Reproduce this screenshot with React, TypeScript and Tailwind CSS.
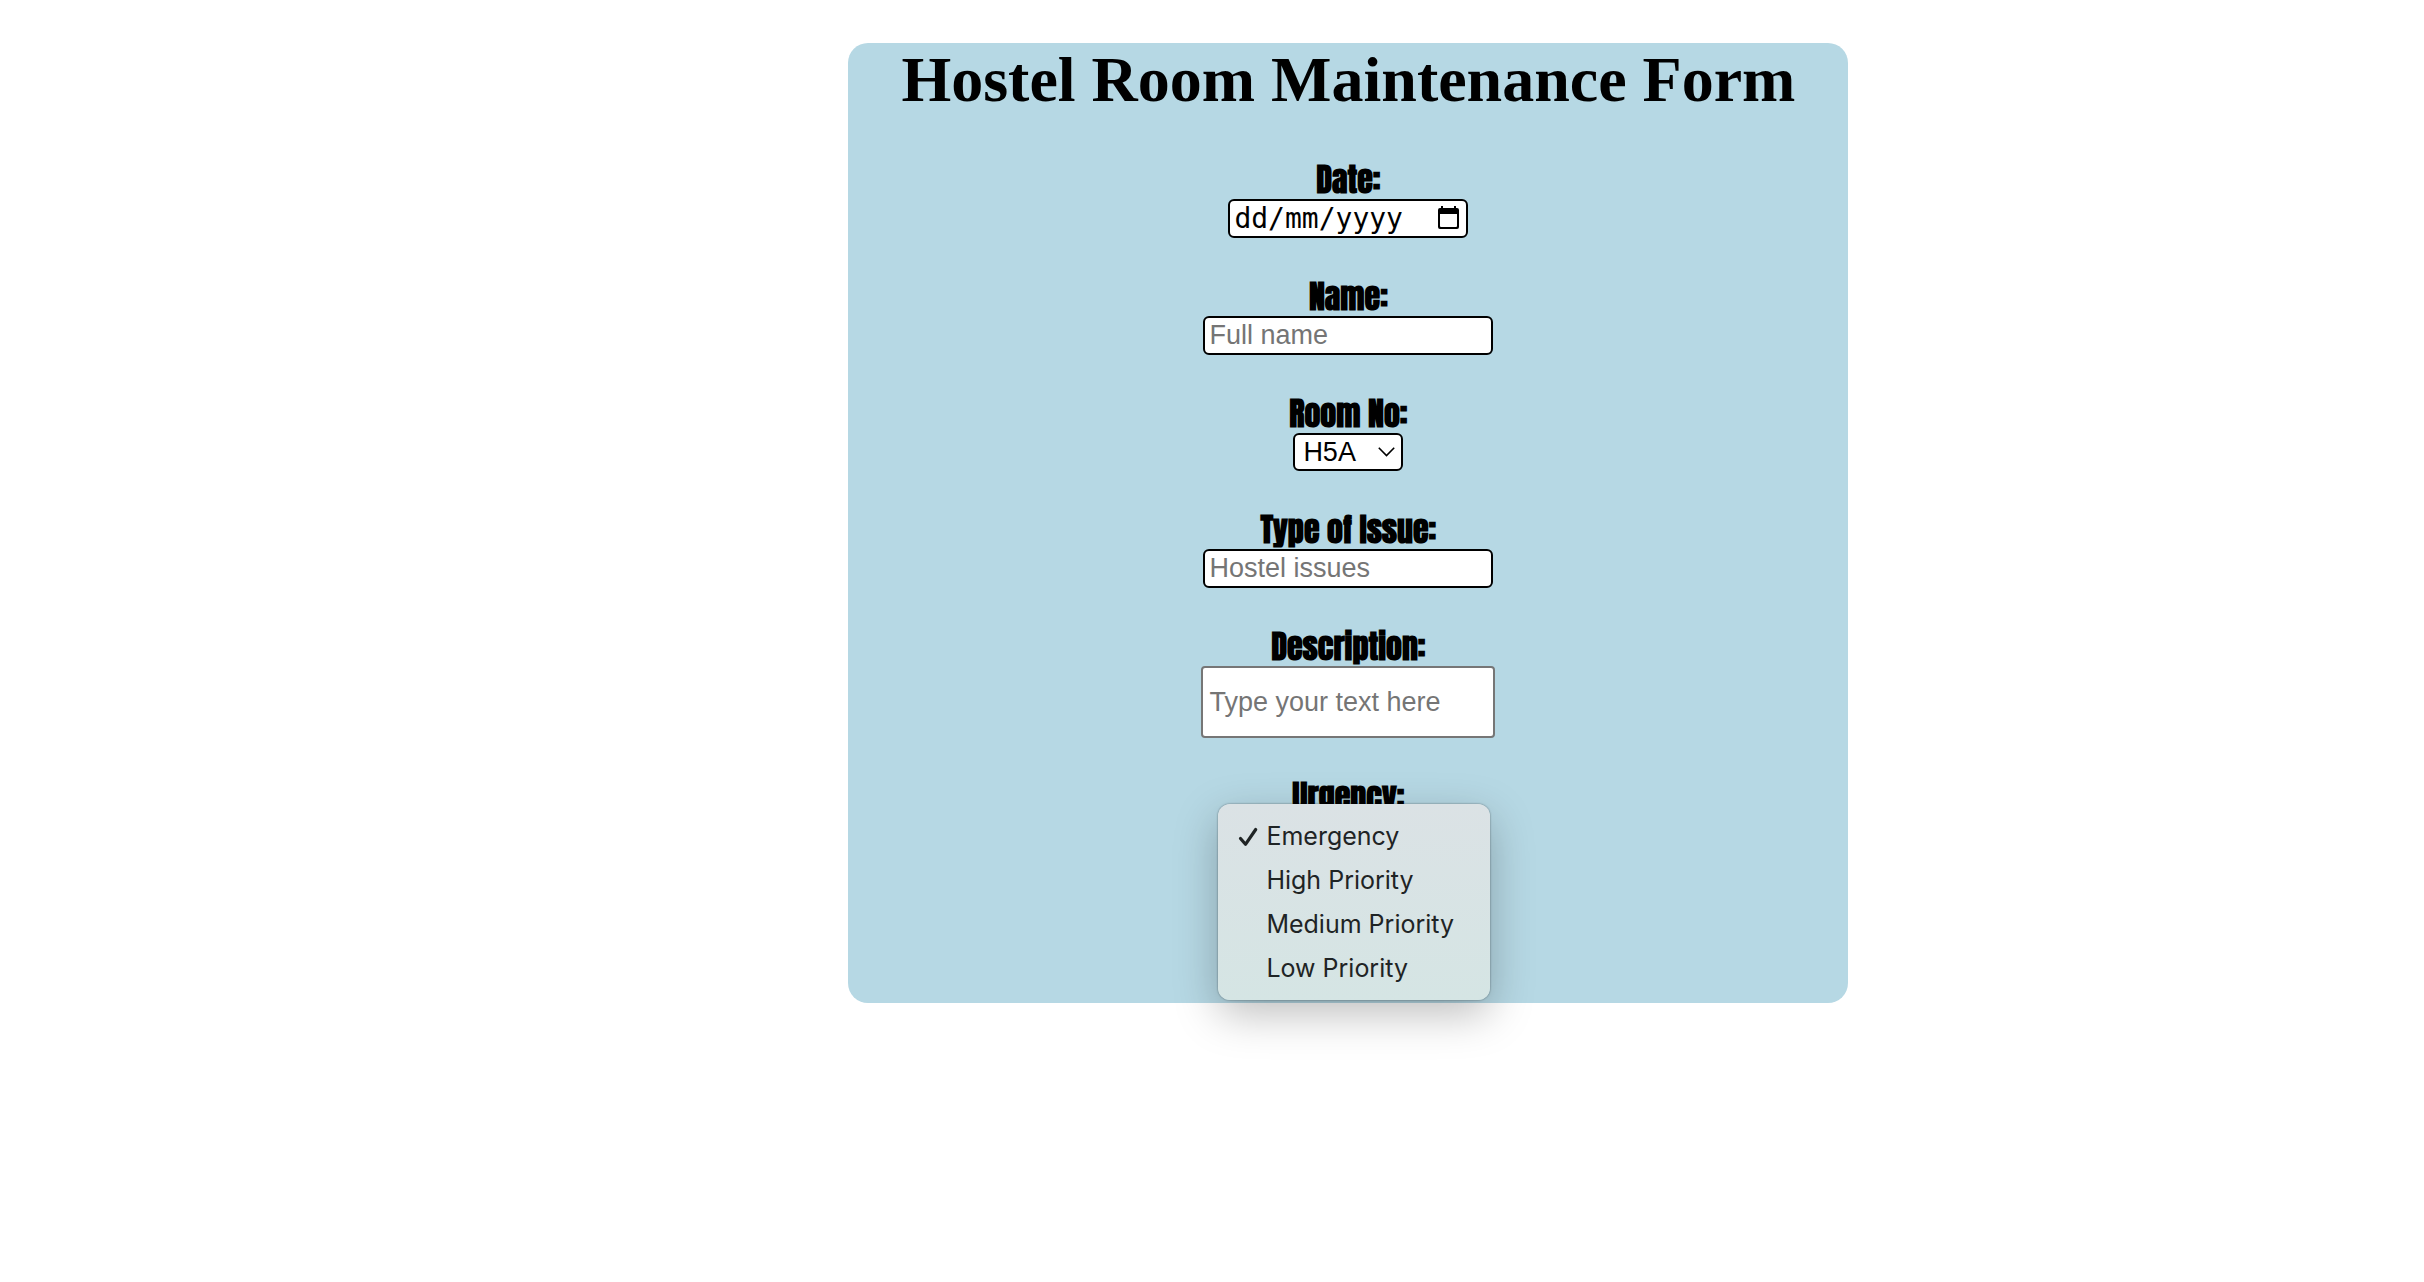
import { useState, type ReactNode } from "react";

const rooms = ["H5A", "H5B", "H5C"];
const urgencies = ["Emergency", "High Priority", "Medium Priority", "Low Priority"];

const control =
  "block rounded-[6px] border-2 border-black bg-white px-1 text-[27px] leading-[31px] text-black placeholder:text-[#757575] placeholder:opacity-100 outline-none font-['Liberation_Sans',Arial,sans-serif]";

function Field({ id, label, children }: { id: string; label: string; children: ReactNode }) {
  return (
    <div className="flex flex-col items-center">
      <label
        htmlFor={id}
        id={id + "-label"}
        className="font-[Impact,Anton,'Roboto_Condensed',Roboto,sans-serif] text-[32px] leading-[39px] font-bold whitespace-nowrap"
      >
        {label}
      </label>
      {children}
    </div>
  );
}

function CalendarIcon() {
  return (
    <svg viewBox="0 0 21 23" className="h-[23px] w-[21px]" aria-hidden="true">
      <path
        fillRule="evenodd"
        d="M3 0h2v2h11V0h2v2h1a2 2 0 0 1 2 2v17a2 2 0 0 1-2 2H2a2 2 0 0 1-2-2V4a2 2 0 0 1 2-2h1V0zM2 8v12q0 1 1 1h15q1 0 1-1V8H2z"
        fill="black"
      />
    </svg>
  );
}

export default function App() {
  const [urgency, setUrgency] = useState("Emergency");
  return (
    <main className="min-h-screen bg-white pt-[43px] text-black">
      <form className="ml-[35%] flex w-[1000px] flex-col items-center rounded-[20px] bg-[#b6d8e4] pb-[149px]">
        <h1 className="font-['Liberation_Serif','Times_New_Roman',serif] text-[64px] leading-[74px] font-bold whitespace-nowrap">
          Hostel Room Maintenance Form
        </h1>
        <div className="mt-[43px] flex flex-col items-center gap-[39px]">
          <Field id="date" label="Date:">
            <div className="relative">
              <input
                id="date"
                type="text"
                placeholder="dd/mm/yyyy"
                className="block h-[39px] w-[240px] rounded-[6px] border-2 border-black bg-white px-1 font-['DejaVu_Sans_Mono',monospace] text-[28px] text-black outline-none placeholder:text-black placeholder:opacity-100"
              />
              <button type="button" aria-label="Open calendar" className="absolute top-[7px] right-[9px]">
                <CalendarIcon />
              </button>
            </div>
          </Field>
          <Field id="name" label="Name:">
            <input id="name" type="text" placeholder="Full name" className={control + " h-[39px] w-[290px]"} />
          </Field>
          <Field id="room" label="Room No:">
            <div className="relative">
              <select id="room" className={control + " h-[38px] w-[110px] appearance-none pl-2"}>
                {rooms.map((r) => (
                  <option key={r}>{r}</option>
                ))}
              </select>
              <svg
                viewBox="0 0 17 10"
                className="pointer-events-none absolute top-[14px] right-2 h-[10px] w-[17px]"
                fill="none"
                stroke="black"
                strokeWidth="1.6"
                aria-hidden="true"
              >
                <path d="M.8.8 8.5 8.5 16.2.8" />
              </svg>
            </div>
          </Field>
          <Field id="issue" label="Type of Issue:">
            <input id="issue" type="text" placeholder="Hostel issues" className={control + " h-[39px] w-[290px]"} />
          </Field>
          <Field id="description" label="Description:">
            <input
              id="description"
              type="text"
              placeholder="Type your text here"
              className="block h-[72px] w-[294px] rounded-[4px] border-2 border-[#767676] bg-white px-[6px] font-['Liberation_Sans',Arial,sans-serif] text-[27px] outline-none placeholder:text-[#757575] placeholder:opacity-100"
            />
          </Field>
          <Field id="urgency" label="Urgency:">
            <div className="relative">
              <button
                id="urgency"
                type="button"
                aria-haspopup="listbox"
                aria-expanded="true"
                className="block h-[38px] w-[240px] rounded-[6px] border-2 border-black bg-white"
              />
              <ul
                role="listbox"
                aria-labelledby="urgency-label"
                className="absolute -top-3 -left-[10px] w-[272px] rounded-[12px] bg-linear-to-b from-[#dbe2e5] to-[#d5e5e4] pt-[11px] pb-[9px] shadow-[0_0_2px_rgba(0,0,0,0.5),0_14px_44px_rgba(0,0,0,0.26)]"
              >
                {urgencies.map((u) => (
                  <li key={u} role="option" aria-selected={u === urgency}>
                    <button
                      type="button"
                      onClick={() => setUrgency(u)}
                      className="flex h-11 w-full items-center pl-5 font-[Inter,sans-serif] text-[25px] whitespace-nowrap text-[#1f2425]"
                    >
                      <span className="w-7">
                        {u === urgency && (
                          <svg
                            viewBox="0 0 20 20"
                            className="size-5"
                            fill="none"
                            stroke="currentColor"
                            strokeWidth="3.2"
                            strokeLinecap="round"
                            strokeLinejoin="round"
                            aria-hidden="true"
                          >
                            <path d="M2.5 11.5 7.5 17.3 17.7 2.5" />
                          </svg>
                        )}
                      </span>
                      {u}
                    </button>
                  </li>
                ))}
              </ul>
            </div>
          </Field>
        </div>
      </form>
    </main>
  );
}
